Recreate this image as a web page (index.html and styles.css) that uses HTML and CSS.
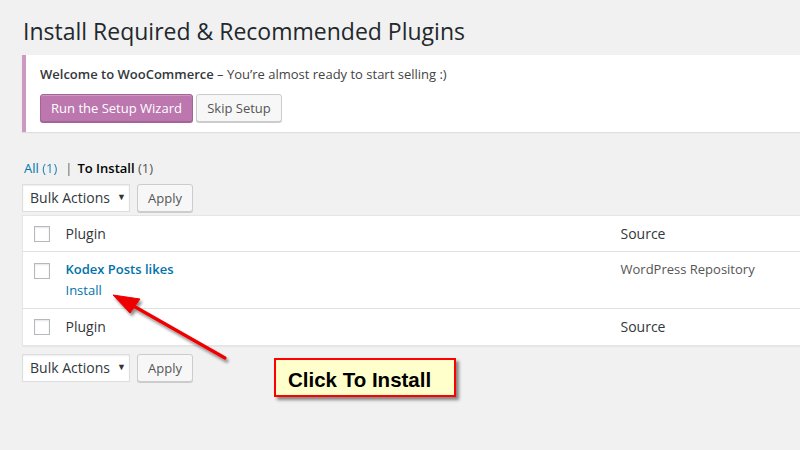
FILE: index.html
```html
<!DOCTYPE html>
<html>
<head>
<meta charset="utf-8">
<link rel="stylesheet" href="styles.css">
</head>
<body>
<div class="wrap">
  <h1 class="page-title">Install Required &amp; Recommended Plugins</h1>
  <div class="notice">
    <p class="notice-text"><strong>Welcome to WooCommerce</strong> – You’re almost ready to start selling :)</p>
    <div class="notice-actions">
      <span class="btn btn-primary">Run the Setup Wizard</span>
      <span class="btn">Skip Setup</span>
    </div>
  </div>
  <ul class="subsubsub">
    <li><span class="link">All <span class="count">(1)</span></span><span class="sep">|</span></li>
    <li><span class="current">To Install</span> <span class="count">(1)</span></li>
  </ul>
  <div class="tablenav">
    <span class="select">Bulk Actions <span class="caret">▼</span></span>
    <span class="btn btn-small">Apply</span>
  </div>
  <table class="plugins">
    <colgroup><col class="col-cb"><col class="col-plugin"><col class="col-source"></colgroup>
    <thead>
      <tr><td class="cb"><span class="checkbox"></span></td><th class="head">Plugin</th><th class="head">Source</th></tr>
    </thead>
    <tbody>
      <tr class="row">
        <td class="cb"><span class="checkbox"></span></td>
        <td class="plugin-cell"><div class="plugin-name">Kodex Posts likes</div><div class="plugin-action">Install</div></td>
        <td class="source-cell">WordPress Repository</td>
      </tr>
    </tbody>
    <tfoot>
      <tr><td class="cb"><span class="checkbox"></span></td><th class="head">Plugin</th><th class="head">Source</th></tr>
    </tfoot>
  </table>
  <div class="tablenav tablenav-bottom">
    <span class="select">Bulk Actions <span class="caret">▼</span></span>
    <span class="btn btn-small">Apply</span>
  </div>
</div>
<svg class="arrow" width="800" height="450" viewBox="0 0 800 450">
  <defs>
    <filter id="sh" x="-20%" y="-20%" width="140%" height="140%">
      <feGaussianBlur in="SourceAlpha" stdDeviation="1.5"/>
      <feOffset dx="2" dy="3" result="b"/>
      <feComponentTransfer><feFuncA type="linear" slope="0.45"/></feComponentTransfer>
      <feMerge><feMergeNode/><feMergeNode in="SourceGraphic"/></feMerge>
    </filter>
  </defs>
  <g filter="url(#sh)" fill="#ee0000" stroke="#ee0000">
    <line x1="225" y1="358" x2="130" y2="304" stroke-width="3.2" stroke-linecap="round"/>
    <polygon points="113,295 140,299 130,313" stroke-width="1" stroke-linejoin="round"/>
  </g>
</svg>
<div class="callout">Click To Install</div>
</body>
</html>
```
FILE: styles.css
```css
html, body {
  margin: 0;
  padding: 0;
  background: #f1f1f1;
  overflow: hidden;
  width: 800px;
  height: 450px;
}
body {
  font-family: "Open Sans", "Noto Sans", sans-serif;
  font-size: 13px;
  line-height: 1.4;
  color: #444;
  position: relative;
}
.wrap {
  width: 1000px;
  padding: 0 0 0 22px;
}
.page-title {
  margin: 0;
  padding: 17px 0 0 1px;
  font-size: 23px;
  font-weight: 400;
  line-height: 29px;
  color: #23282d;
}
.notice {
  margin-top: 9px;
  background: #fff;
  border-left: 4px solid #cc99c2;
  box-shadow: 0 1px 1px rgba(0,0,0,0.08);
  padding: 9px 14px 9px;
  height: 59px;
}
.notice-text {
  margin: 0;
  color: #444;
  line-height: 20px;
}
.notice-text strong { font-weight: 600; color: #32373c; }
.notice-actions {
  margin-top: 10px;
  display: flex;
  gap: 3px;
}
.btn {
  display: inline-flex;
  align-items: center;
  box-sizing: border-box;
  height: 28px;
  padding: 0 10px 1px;
  border: 1px solid #ccc;
  border-radius: 3px;
  background: #f7f7f7;
  box-shadow: 0 1px 0 #ccc;
  color: #555;
  font-size: 13px;
}
.btn-primary {
  background: #bb77ae;
  border-color: #a36597;
  box-shadow: inset 0 1px 0 rgba(255,255,255,0.25), 0 1px 0 #a36597;
  color: #fff;
  width: 153px;
  justify-content: center;
  padding: 0;
}
.notice-actions .btn:not(.btn-primary) { width: 86px; justify-content: center; padding: 0; }
.subsubsub {
  list-style: none;
  margin: 27px 0 0 2px;
  padding: 0;
  display: flex;
  line-height: 18px;
}
.subsubsub li { display: block; white-space: pre; }
.link { color: #0073aa; }
.count { color: #555; }
.link .count { color: #0073aa; opacity: 0.85; }
.sep { color: #666; margin: 0 5px 0 8px; }
.current { color: #000; font-weight: 600; }
.tablenav {
  height: 31px;
  display: flex;
  gap: 7px;
  align-items: flex-start;
  margin-top: 7px;
}
.tablenav-bottom { margin-top: 8px; }
.select {
  box-sizing: border-box;
  width: 108px;
  height: 28px;
  border: 1px solid #ddd;
  background: #fff;
  box-shadow: inset 0 1px 2px rgba(0,0,0,0.07);
  color: #32373c;
  font-size: 14px;
  display: flex;
  align-items: center;
  padding: 0 0 1px 7px;
}
.caret {
  font-size: 9px;
  color: #333;
  margin-left: 7px;
}
.btn-small {
  width: 56px;
  justify-content: center;
  padding: 0;
  height: 28px;
  font-size: 13px;
}
.plugins {
  width: 978px;
  border-collapse: collapse;
  table-layout: fixed;
  background: #fff;
  border: 1px solid #e5e5e5;
  box-shadow: 0 1px 1px rgba(0,0,0,0.04);
}
.col-cb { width: 33px; }
.col-plugin { width: 555px; }
.plugins td, .plugins th {
  padding: 0 10px;
  text-align: left;
  vertical-align: top;
}
.plugins .cb { padding: 0 0 0 11px; }
thead tr { height: 36px; border-bottom: 1px solid #e1e1e1; }
tfoot tr { height: 37px; border-top: 1px solid #e1e1e1; }
.head {
  font-weight: 400;
  font-size: 14px;
  color: #32373c;
  line-height: 20px;
  padding-top: 8px !important;
}
thead .cb, tfoot .cb { padding-top: 10px !important; }
.checkbox {
  display: block;
  box-sizing: border-box;
  width: 16px;
  height: 16px;
  border: 1px solid #b4b9be;
  background: #fff;
  box-shadow: inset 0 1px 2px rgba(0,0,0,0.1);
}
.row { height: 57px; }
.row .cb { padding-top: 11px !important; }
.plugin-cell { padding-top: 7px !important; }
.plugin-name {
  color: #0073aa;
  font-weight: 600;
  font-size: 13px;
  line-height: 20px;
}
.plugin-action {
  color: #0073aa;
  font-size: 13px;
  line-height: 20px;
  margin-top: 1px;
}
.source-cell {
  padding-top: 8px !important;
  color: #555;
  font-size: 13px;
  line-height: 19px;
}
.arrow {
  position: absolute;
  left: 0;
  top: 0;
  pointer-events: none;
}
.callout {
  position: absolute;
  left: 274px;
  top: 358px;
  box-sizing: border-box;
  width: 182px;
  height: 39px;
  border: 2px solid #f00;
  background: #ffffcc;
  box-shadow: 3px 3px 3px rgba(0,0,0,0.45);
  font-family: "Liberation Sans", Arial, sans-serif;
  font-weight: 700;
  font-size: 20.5px;
  color: #000;
  padding: 8px 0 0 12px;
  line-height: 24px;
}
```
